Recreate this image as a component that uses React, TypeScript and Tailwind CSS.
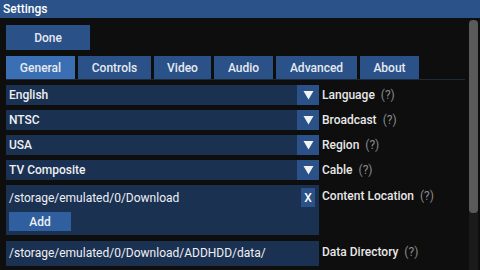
import React from 'react';

const tabs = ['General', 'Controls', 'Video', 'Audio', 'Advanced', 'About'];
const tabWidths = ['w-[69px]', 'w-[73px]', 'w-[57px]', 'w-[59px]', 'w-[81px]', 'w-[59px]'];

const selects = [
    { value: 'English', label: 'Language' },
    { value: 'NTSC', label: 'Broadcast' },
    { value: 'USA', label: 'Region' },
    { value: 'TV Composite', label: 'Cable' },
];

const Label = ({ text }: { text: string }) => (
    <div className="flex items-center gap-[6px] text-[12px] font-medium text-[#e8e8e8]">
        <span>{text}</span>
        <span className="text-[#8a8a8a] font-normal">(?)</span>
    </div>
);

const Arrow = () => (
    <svg width="11" height="10" viewBox="0 0 11 10">
        <path d="M0.5 1 L10.5 1 L5.5 9.5 Z" fill="#f2f2f2" />
    </svg>
);

export default function App() {
    return (
        <div className="w-[480px] h-[270px] bg-[#0e0e0e] flex flex-col overflow-hidden" style={{ fontFamily: 'Roboto, "Noto Sans", sans-serif' }}>
            <div className="h-[18px] shrink-0 bg-[#2b5289] text-white text-[12px] font-medium leading-[18px] pl-[3px]">
                Settings
            </div>
            <div className="flex flex-1 min-h-0">
                <div className="flex-1 pl-[6px] pt-[7px] flex flex-col">
                    <div className="w-[84px] h-[25px] bg-[#2a5188] text-[#e6eaf0] text-[12px] font-medium flex items-center justify-center">
                        Done
                    </div>
                    <div className="flex gap-[3px] mt-[6px] h-[23px]">
                        {tabs.map((t, i) => (
                            <div
                                key={t}
                                className={`${tabWidths[i]} ${i === 0 ? 'bg-[#3a70b3]' : 'bg-[#2a5188]'} text-[#e6eaf0] text-[12px] font-medium flex items-center justify-center`}
                            >
                                {t}
                            </div>
                        ))}
                    </div>
                    <div className="h-px w-[459px] bg-[#1e2a3a]" />
                    <div className="flex flex-col gap-[5px] mt-[5px]">
                        {selects.map((s) => (
                            <div key={s.value} className="flex items-center gap-[3px] h-[20px]">
                                <div className="w-[313px] h-[20px] flex bg-[#1b3151]">
                                    <div className="flex-1 pl-[3px] text-[12px] font-medium text-[#eef0f4] leading-[20px]">{s.value}</div>
                                    <div className="w-[22px] h-[20px] bg-[#2a5188] flex items-center justify-center">
                                        <Arrow />
                                    </div>
                                </div>
                                <Label text={s.label} />
                            </div>
                        ))}
                        <div className="flex gap-[3px] h-[50px]">
                            <div className="w-[313px] h-[50px] bg-[#1b3151] flex flex-col pl-[3px]">
                                <div className="flex items-center justify-between h-[25px] pr-[4px]">
                                    <span className="text-[12px] text-[#eef0f4]">/storage/emulated/0/Download</span>
                                    <span className="w-[14px] h-[19px] bg-[#2a5188] text-[12px] font-medium text-white flex items-center justify-center">X</span>
                                </div>
                                <div className="w-[62px] h-[19px] mt-[2px] bg-[#2f5f9f] text-[12px] font-medium text-[#eef0f4] flex items-center justify-center">
                                    Add
                                </div>
                            </div>
                            <div className="pt-[2px]">
                                <Label text="Content Location" />
                            </div>
                        </div>
                        <div className="flex items-start gap-[3px] h-[25px] mt-[1px]">
                            <div className="w-[313px] h-[25px] bg-[#1b3151] pl-[3px] text-[12px] text-[#eef0f4] leading-[25px]">
                                /storage/emulated/0/Download/ADDHDD/data/
                            </div>
                            <div className="pt-[2px]">
                                <Label text="Data Directory" />
                            </div>
                        </div>
                    </div>
                </div>
                <div className="w-[9px] mr-[2px] mt-[2px] bg-[#1a1a1a] rounded-t-[4px] flex flex-col">
                    <div className="h-[193px] bg-[#5a5a5a] rounded-[4px]" />
                </div>
            </div>
        </div>
    );
}
